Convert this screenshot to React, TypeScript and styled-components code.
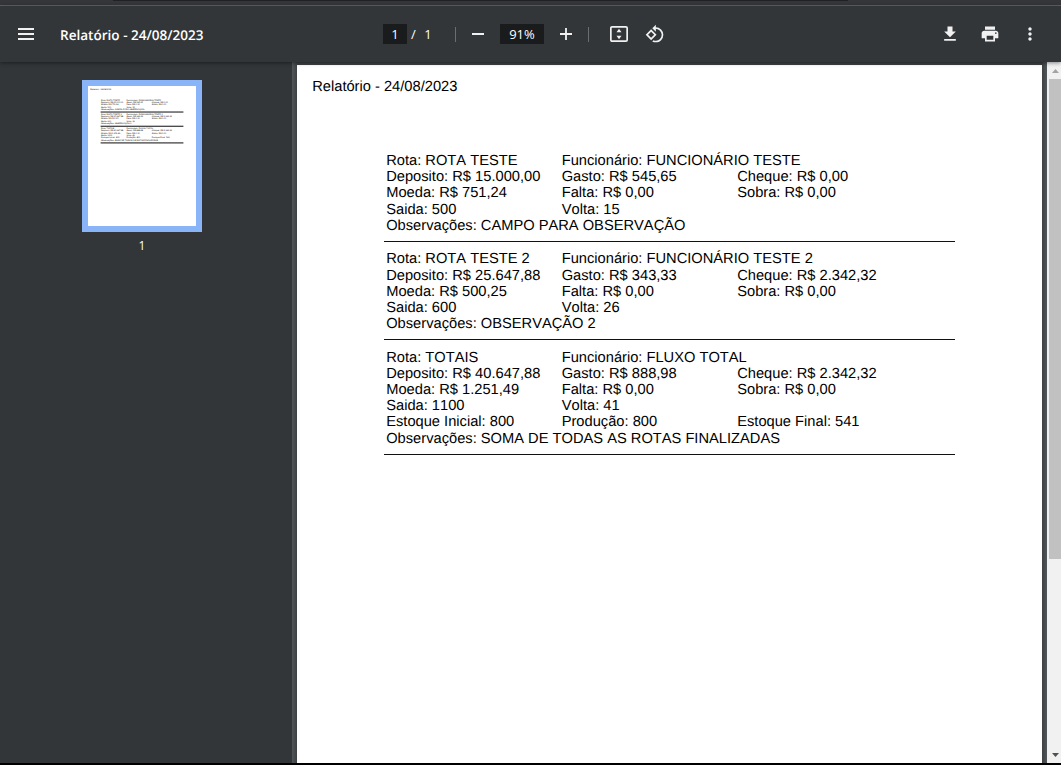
import React from "react";
import styled, { createGlobalStyle } from "styled-components";

const Global = createGlobalStyle`
  * { box-sizing: border-box; }
  body { margin: 0; background: #000; overflow: hidden; }
`;

const Viewer = styled.div`
  display: flex;
  flex-direction: column;
  width: 1061px;
  height: 765px;
  padding-bottom: 2px;
  background: #000;
  font-family: "Open Sans", "Noto Sans", sans-serif;
`;

const BrowserEdge = styled.div`
  display: flex;
  justify-content: center;
  flex: none;
  height: 6px;
  padding-right: 100px;
  background: #35363a;
  border-bottom: 1px solid #5f6368;
`;

const AddressEdge = styled.div`
  width: 735px;
  height: 1px;
  background: #202124;
`;

const Toolbar = styled.header`
  position: relative;
  z-index: 1;
  display: grid;
  grid-template-columns: 383px 1fr auto;
  align-items: center;
  flex: none;
  height: 56px;
  padding-right: 21px;
  background: #323639;
  color: #f1f1f1;
  box-shadow: 0 1px 4px rgba(0, 0, 0, 0.45);
`;

const Group = styled.div<{ $gap?: number; $left?: number }>`
  display: flex;
  align-items: center;
  gap: ${(p) => p.$gap ?? 0}px;
  padding-left: ${(p) => p.$left ?? 0}px;
`;

const Title = styled.span`
  font-size: 13.55px;
  font-weight: 600;
  line-height: 20px;
  color: #fff;
  white-space: nowrap;
  padding-top: 2px;
  text-rendering: geometricPrecision;
`;

const Field = styled.span<{ $width: number }>`
  width: ${(p) => p.$width}px;
  height: 20px;
  background: #191b1c;
  color: #fff;
  font-size: 13px;
  line-height: 20px;
  text-align: center;
`;

const PageTotal = styled.span`
  width: 44px;
  padding-left: 4px;
  font-size: 13px;
  line-height: 20px;
  color: #fff;
  word-spacing: 5px;
  white-space: nowrap;
`;

const Separator = styled.span<{ $before: number; $after: number }>`
  width: 1px;
  height: 15px;
  margin: 0 ${(p) => p.$after}px 0 ${(p) => p.$before}px;
  background: #6b6e70;
`;

const IconButton = styled.button<{ $width: number }>`
  display: flex;
  align-items: center;
  justify-content: center;
  width: ${(p) => p.$width}px;
  height: 24px;
  padding: 0;
  border: 0;
  background: none;
  color: #f1f1f1;

  svg { display: block; fill: currentColor; }
`;

const Body = styled.div`
  display: flex;
  flex: 1;
  min-height: 0;
`;

const Sidebar = styled.aside`
  display: flex;
  flex-direction: column;
  align-items: center;
  width: 292px;
  padding: 18px 8px 0 0;
  background: #323639;
`;

const ThumbFrame = styled.div`
  width: 120px;
  height: 152px;
  border: 6px solid #8ab4f8;
  background: #fff;
  overflow: hidden;
`;

const ThumbScale = styled.div`
  width: 745px;
  transform: scale(0.145);
  transform-origin: 0 0;
`;

const ThumbLabel = styled.span`
  margin-top: 5px;
  font-size: 12px;
  font-weight: 500;
  line-height: 18px;
  color: #fff;
`;

const Content = styled.main`
  display: flex;
  flex: 1;
  padding: 3px 5px 0;
  background: linear-gradient(90deg, #525659, #3d4144 5px, #3d4144 750px, #525659);
`;

const Page = styled.div`
  width: 745px;
  background: #fff;
`;

const Report = styled.article`
  padding: 14.05px 87px 0 87px;
  font-family: "Liberation Sans", Arial, sans-serif;
  font-size: 14.68px;
  line-height: 16.2px;
  color: #000;
  font-kerning: none;
  text-rendering: geometricPrecision;
`;

const ReportTitle = styled.h1`
  margin: 0 0 57.75px -71.8px;
  font-size: inherit;
  font-weight: 400;
  line-height: 16.25px;
`;

const Section = styled.section<{ $rule: number }>`
  padding: 0 0 7.1px 2.2px;
  margin-bottom: ${(p) => 10.3 - p.$rule}px;
  border-bottom: ${(p) => p.$rule}px solid #111;
`;

const Row = styled.div`
  display: grid;
  grid-template-columns: 175.5px 175.5px 1fr;
  height: 16.2px;
  white-space: nowrap;
`;

const Scrollbar = styled.div`
  display: flex;
  flex-direction: column;
  width: 14px;
  padding-left: 2px;
  background: #f1f1f1;
`;

const ScrollArrow = styled.div<{ $down?: boolean }>`
  display: flex;
  align-items: center;
  justify-content: center;
  height: 17px;
  padding-left: 1px;
  margin-top: ${(p) => (p.$down ? "auto" : "0")};

  svg { fill: ${(p) => (p.$down ? "#505050" : "#a3a3a3")}; }
`;

const ScrollThumb = styled.div`
  height: 480px;
  background: #c1c1c1;
`;

const sections: string[][][] = [
  [
    ["Rota: ROTA TESTE", "Funcionário: FUNCIONÁRIO TESTE"],
    ["Deposito: R$ 15.000,00", "Gasto: R$ 545,65", "Cheque: R$ 0,00"],
    ["Moeda: R$ 751,24", "Falta: R$ 0,00", "Sobra: R$ 0,00"],
    ["Saida: 500", "Volta: 15"],
    ["Observações: CAMPO PARA OBSERVAÇÃO"],
  ],
  [
    ["Rota: ROTA TESTE 2", "Funcionário: FUNCIONÁRIO TESTE 2"],
    ["Deposito: R$ 25.647,88", "Gasto: R$ 343,33", "Cheque: R$ 2.342,32"],
    ["Moeda: R$ 500,25", "Falta: R$ 0,00", "Sobra: R$ 0,00"],
    ["Saida: 600", "Volta: 26"],
    ["Observações: OBSERVAÇÃO 2"],
  ],
  [
    ["Rota: TOTAIS", "Funcionário: FLUXO TOTAL"],
    ["Deposito: R$ 40.647,88", "Gasto: R$ 888,98", "Cheque: R$ 2.342,32"],
    ["Moeda: R$ 1.251,49", "Falta: R$ 0,00", "Sobra: R$ 0,00"],
    ["Saida: 1100", "Volta: 41"],
    ["Estoque Inicial: 800", "Produção: 800", "Estoque Final: 541"],
    ["Observações: SOMA DE TODAS AS ROTAS FINALIZADAS"],
  ],
];

function ReportBody({ rule }: { rule: number }) {
  return (
    <Report>
      <ReportTitle>Relatório - 24/08/2023</ReportTitle>
      {sections.map((rows, i) => (
        <Section key={i} $rule={rule}>
          {rows.map((cells, r) => (
            <Row key={r}>
              {cells.map((cell) => (
                <span key={cell}>{cell}</span>
              ))}
            </Row>
          ))}
        </Section>
      ))}
    </Report>
  );
}

export default function App() {
  return (
    <Viewer>
      <Global />
      <BrowserEdge>
        <AddressEdge />
      </BrowserEdge>
      <Toolbar>
        <Group $left={18} $gap={26}>
          <IconButton $width={16} aria-label="Menu">
            <svg width="16" height="12" viewBox="0 0 16 12">
              <path d="M0 0h16v2H0zM0 5h16v2H0zM0 10h16v2H0z" />
            </svg>
          </IconButton>
          <Title>Relatório - 24/08/2023</Title>
        </Group>
        <Group>
          <Field $width={24}>1</Field>
          <PageTotal>/ 1</PageTotal>
          <Separator $before={4} $after={16} />
          <IconButton $width={12} aria-label="Zoom out">
            <svg width="12" height="2" viewBox="0 0 12 2">
              <path d="M0 0h12v2H0z" />
            </svg>
          </IconButton>
          <Group $left={16}>
            <Field $width={44}>91%</Field>
          </Group>
          <Group $left={16}>
            <IconButton $width={12} aria-label="Zoom in">
              <svg width="12" height="12" viewBox="0 0 12 12">
                <path d="M5.1 0h1.8v5.1H12v1.8H6.9V12H5.1V6.9H0V5.1h5.1z" />
              </svg>
            </IconButton>
          </Group>
          <Separator $before={16} $after={21} />
          <Group $gap={17}>
            <IconButton $width={18} aria-label="Fit to page">
              <svg width="18" height="16" viewBox="0 0 18 16">
                <rect x=".85" y=".85" width="16.3" height="14.3" rx="1.2" fill="none" stroke="currentColor" strokeWidth="1.7" />
                <path d="M9 2.700l2.500 3.500h-5zM9 13.300l2.500-3.500h-5z" />
              </svg>
            </IconButton>
            <IconButton $width={20} aria-label="Rotate">
              <svg width="20" height="20" viewBox="0 0 24 24">
                <path d="M7.34 6.41.86 12.9l6.49 6.48 6.49-6.48-6.5-6.49zM3.69 12.9l3.66-3.66L11 12.9l-3.66 3.66-3.65-3.66zm15.67-6.26A8.95 8.95 0 0 0 13 4V.76L8.76 5 13 9.24V6c1.79 0 3.58.68 4.95 2.05a7.007 7.007 0 0 1 0 9.9 6.973 6.973 0 0 1-7.79 1.44l-1.49 1.49C10.02 21.62 11.51 22 13 22c2.3 0 4.61-.88 6.36-2.64a8.98 8.98 0 0 0 0-12.72z" />
              </svg>
            </IconButton>
          </Group>
        </Group>
        <Group $gap={20}>
          <IconButton $width={20} aria-label="Download">
            <svg width="20" height="20" viewBox="0 0 24 24">
              <path d="M19 9h-4V3H9v6H5l7 7 7-7zM5 18v2h14v-2H5z" />
            </svg>
          </IconButton>
          <IconButton $width={20} aria-label="Print">
            <svg width="20" height="20" viewBox="0 0 24 24">
              <path d="M19 8H5c-1.66 0-3 1.34-3 3v6h4v4h12v-4h4v-6c0-1.66-1.34-3-3-3zm-3 11H8v-5h8v5zm3-7c-.55 0-1-.45-1-1s.45-1 1-1 1 .45 1 1-.45 1-1 1zm-1-9H6v4h12V3z" />
            </svg>
          </IconButton>
          <IconButton $width={20} aria-label="More">
            <svg width="20" height="20" viewBox="0 0 24 24">
              <path d="M12 8c1.100 0 2-.9 2-2s-.9-2-2-2-2 .9-2 2 .9 2 2 2zm0 2c-1.100 0-2 .9-2 2s.9 2 2 2 2-.9 2-2-.9-2-2-2zm0 6c-1.100 0-2 .9-2 2s.9 2 2 2 2-.9 2-2-.9-2-2-2z" />
            </svg>
          </IconButton>
        </Group>
      </Toolbar>
      <Body>
        <Sidebar>
          <ThumbFrame>
            <ThumbScale>
              <ReportBody rule={7} />
            </ThumbScale>
          </ThumbFrame>
          <ThumbLabel>1</ThumbLabel>
        </Sidebar>
        <Content>
          <Page>
            <ReportBody rule={1} />
          </Page>
        </Content>
        <Scrollbar>
          <ScrollArrow>
            <svg width="7" height="4" viewBox="0 0 7 4">
              <path d="M3.500 0L7 4H0z" />
            </svg>
          </ScrollArrow>
          <ScrollThumb />
          <ScrollArrow $down>
            <svg width="7" height="4" viewBox="0 0 7 4">
              <path d="M0 0h7L3.500 4z" />
            </svg>
          </ScrollArrow>
        </Scrollbar>
      </Body>
    </Viewer>
  );
}
